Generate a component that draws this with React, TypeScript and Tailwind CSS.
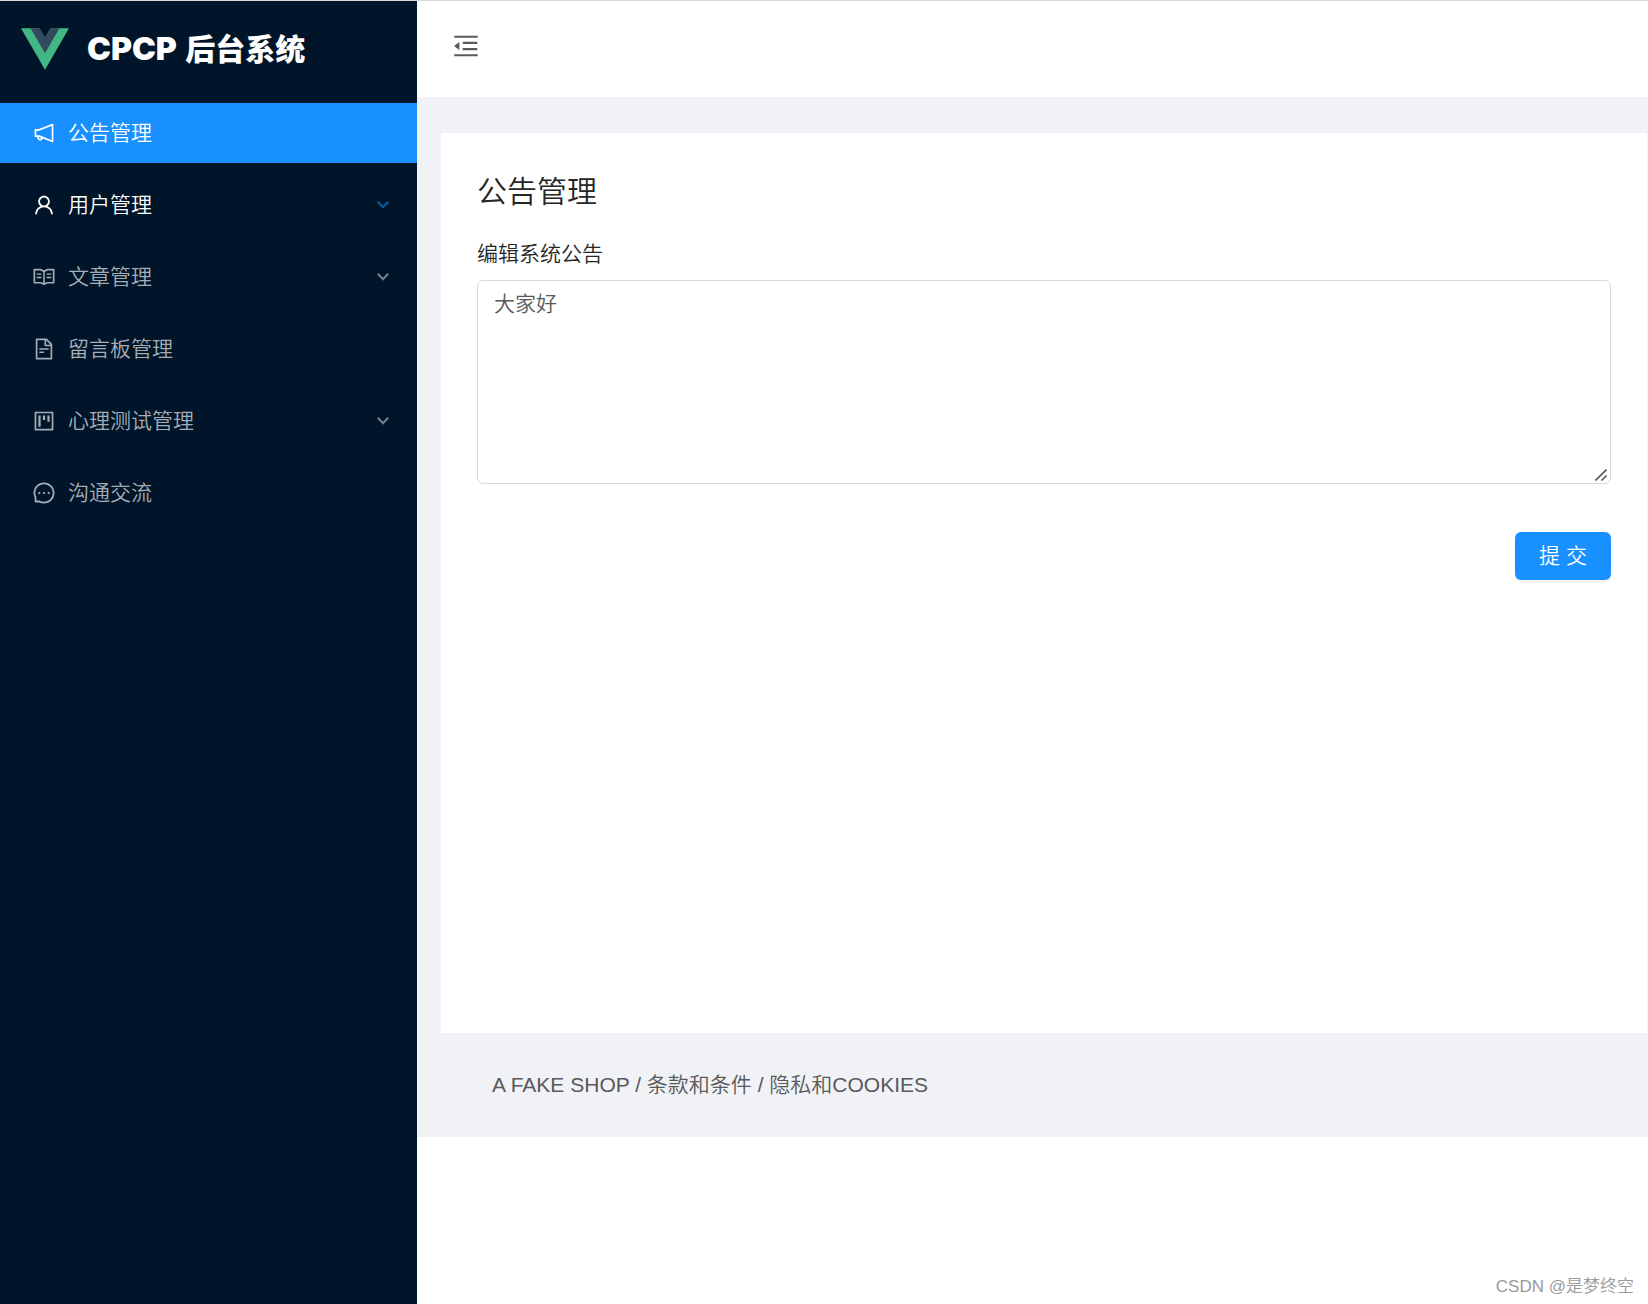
import type { ReactNode } from "react";
import {
  AiOutlineFileText,
  AiOutlineMenuFold,
  AiOutlineMessage,
  AiOutlineNotification,
  AiOutlineProject,
  AiOutlineRead,
  AiOutlineUser,
} from "react-icons/ai";

type Item = {
  label: string;
  icon: ReactNode;
  state?: "active" | "hover";
  expandable?: boolean;
};

const items: Item[] = [
  { label: "公告管理", icon: <AiOutlineNotification />, state: "active" },
  { label: "用户管理", icon: <AiOutlineUser />, state: "hover", expandable: true },
  { label: "文章管理", icon: <AiOutlineRead />, expandable: true },
  { label: "留言板管理", icon: <AiOutlineFileText /> },
  { label: "心理测试管理", icon: <AiOutlineProject />, expandable: true },
  { label: "沟通交流", icon: <AiOutlineMessage /> },
];

function Logo() {
  return (
    <svg viewBox="0 0 261.76 226.69" className="h-[42px] w-12 shrink-0" aria-hidden="true">
      <path fill="#41b883" d="M161.096.001l-30.225 52.351L100.647.001H-.005l130.877 226.688L261.749.001z" />
      <path fill="#34495e" d="M161.096.001l-30.225 52.351L100.647.001H52.346l78.526 136.01L209.398.001z" />
    </svg>
  );
}

function Chevron({ className }: { className: string }) {
  return (
    <svg viewBox="0 0 12 8" className={`h-2 w-3 ${className}`} fill="none" stroke="currentColor" strokeWidth="2.2" aria-hidden="true">
      <path d="M0.8 0.8l5.2 5.4 5.2-5.4" />
    </svg>
  );
}

function MenuItem({ item }: { item: Item }) {
  const tone =
    item.state === "active"
      ? "bg-[#1890ff] text-white"
      : item.state === "hover"
        ? "text-white"
        : "text-[#a6adb4]";
  return (
    <li>
      <button type="button" className={`flex h-15 w-full items-center pr-7 pb-px pl-8 text-left text-[21px] ${tone}`}>
        <span className="mr-3 text-[24px]">{item.icon}</span>
        <span className="flex-1">{item.label}</span>
        {item.expandable && <Chevron className={item.state === "hover" ? "text-[#0f5a9f]" : "text-[#747e88]"} />}
      </button>
    </li>
  );
}

export default function App() {
  return (
    <div className="flex min-h-screen border-t border-[#d9d9d9] bg-white font-['Liberation_Sans','Noto_Sans_CJK_SC',sans-serif] text-[21px] leading-8 font-[350] text-[#262626]">
      <aside className="w-[417px] shrink-0 bg-[#001529]">
        <div className="flex h-24 items-center pl-[21px]">
          <Logo />
          <h1 className="ml-[18px] flex items-baseline gap-0.5 font-['Inter','Noto_Sans_CJK_SC',sans-serif] text-[30px] font-black whitespace-pre text-white">
            <span className="text-[32px]">CPCP </span>
            <span>后台系统</span>
          </h1>
        </div>
        <nav className="pt-1.5">
          <ul className="flex flex-col gap-3">
            {items.map((item) => (
              <MenuItem key={item.label} item={item} />
            ))}
          </ul>
        </nav>
      </aside>

      <div className="min-w-0 flex-1">
        <header className="flex h-24 items-center pl-[34px]">
          <button type="button" aria-label="收起菜单" className="mb-1.5 text-[30px] text-[#595959]">
            <AiOutlineMenuFold />
          </button>
        </header>

        <div className="bg-[#f0f2f5] pt-9 pr-px pl-6">
          <main className="min-h-[900px] bg-white p-9">
            <h2 className="text-[30px] leading-[46px]">公告管理</h2>
            <form className="mt-[25px] flex flex-col" onSubmit={(e) => e.preventDefault()}>
              <label htmlFor="notice" className="leading-7">
                编辑系统公告
              </label>
              <div className="relative mt-3 flex">
                <textarea
                  id="notice"
                  defaultValue="大家好"
                  className="h-[204px] w-full resize-y rounded-md border border-[#d9d9d9] px-4 py-[7px] leading-8 text-[#595959] outline-none [&::-webkit-resizer]:bg-transparent"
                />
                <svg
                  viewBox="0 0 12 12"
                  className="pointer-events-none absolute right-1 bottom-[3px] size-3"
                  fill="none"
                  stroke="#595959"
                  strokeWidth="1.6"
                  aria-hidden="true"
                >
                  <path d="M0.5 11.5l11-11M6.5 11.5l5-5" />
                </svg>
              </div>
              <button
                type="submit"
                className="mt-12 h-12 w-24 self-end rounded-md bg-[#1890ff] text-white shadow-[0_3px_0_rgba(0,0,0,0.045)]"
              >
                提 交
              </button>
            </form>
          </main>
        </div>
        <footer className="bg-[#f0f2f5] px-[75px] py-9 text-[#595959]">A FAKE SHOP / 条款和条件 / 隐私和COOKIES</footer>
      </div>

      <p className="absolute right-3.5 bottom-px text-[17px] text-[#9a9a9a]">CSDN @是梦终空</p>
    </div>
  );
}
